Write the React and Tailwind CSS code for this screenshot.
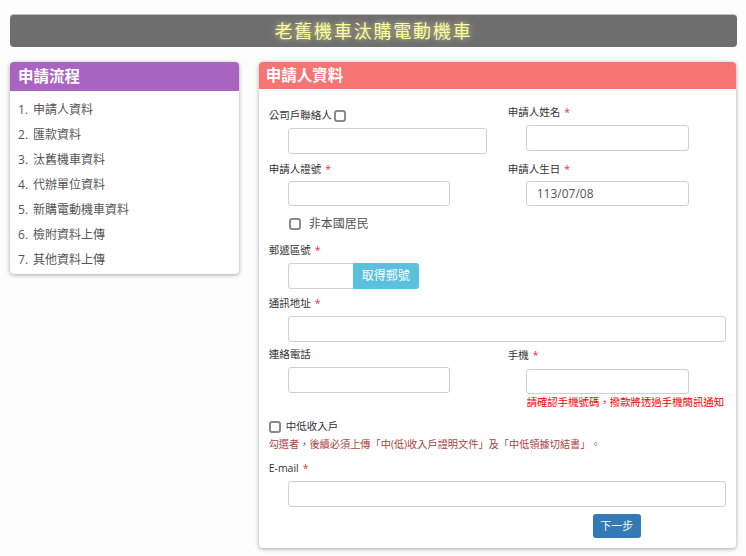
import React from 'react';

const steps = ['申請人資料', '匯款資料', '汰舊機車資料', '代辦單位資料', '新購電動機車資料', '檢附資料上傳', '其他資料上傳'];

const Box = () => (
  <span className="inline-block w-[12px] h-[12px] border-2 border-[#8a8a8a] rounded-[3px] bg-white shrink-0" />
);

const Star = () => <span className="text-[#ee3333] ml-[4px]">*</span>;

const Label = ({ children, star, className = '' }) => (
  <div className={'h-[16px] flex items-center text-[10.5px] text-[#333] ' + className}>
    {children}
    {star && <Star />}
  </div>
);

const Input = ({ w, h = 26, mt = 4, value, ml = 19 }) => (
  <div
    className="border border-[#d0d0d0] rounded-[3px] bg-white flex items-center px-[10px] text-[12px] text-[#555]"
    style={{ width: w, height: h, marginTop: mt, marginLeft: ml }}
  >
    {value}
  </div>
);

const App = () => {
  return (
    <div className="w-[746px] h-[556px] bg-[#fdfdfd] px-[10px] pt-[14px] [text-spacing-trim:space-all]" style={{ fontFamily: '"Open Sans", "Noto Sans CJK TC", sans-serif' }}>
      <div className="w-[727px] h-[33px] bg-[#6e6e6e] rounded-[4px] border-t border-[#bdbdbd] flex items-center justify-center">
        <span className="text-[18px] tracking-[1.8px] text-[#fdfd9c]" style={{ textShadow: '0 0 6px rgba(255,255,180,0.7)' }}>
          老舊機車汰購電動機車
        </span>
      </div>

      <div className="flex gap-[20px] mt-[15px] items-start">
        <div className="w-[229px] bg-white rounded-[4px] shadow-[0_1px_4px_rgba(0,0,0,0.35)] overflow-hidden">
          <div className="h-[29px] bg-[#aa65c3] px-[8px] flex items-center text-white text-[15.5px] font-bold">申請流程</div>
          <ol className="pt-[6px] pb-[2px] pl-[8px]">
            {steps.map((s, i) => (
              <li key={i} className="h-[25px] flex items-center text-[12px] text-[#555]">
                <span className="w-[15px]">{i + 1}.</span>
                <span>{s}</span>
              </li>
            ))}
          </ol>
        </div>

        <div className="w-[478px] bg-white rounded-[4px] shadow-[0_1px_4px_rgba(0,0,0,0.35)] overflow-hidden">
          <div className="h-[27px] bg-[#f77474] px-[7px] flex items-center text-white text-[15.5px] font-bold">申請人資料</div>
          <div className="px-[10px] pt-[16px] pb-[10px]">
            <div className="grid grid-cols-[239px_1fr]">
              <div className="pt-[3px]">
                <Label>公司戶聯絡人<span className="ml-[2px] flex"><Box /></span></Label>
                <Input w={199} />
              </div>
              <div>
                <Label star>申請人姓名</Label>
                <Input w={163} ml={18} />
              </div>
            </div>

            <div className="grid grid-cols-[239px_1fr] mt-[8px]">
              <div>
                <Label star>申請人證號</Label>
                <Input w={162} h={25} mt={3} />
              </div>
              <div>
                <Label star>申請人生日</Label>
                <Input w={163} h={25} mt={3} ml={18} value="113/07/08" />
              </div>
            </div>

            <div className="mt-[10px] ml-[20px] h-[16px] flex items-center gap-[8px] text-[12px] text-[#555]">
              <Box />
              <span>非本國居民</span>
            </div>

            <Label star className="mt-[11px]">郵遞區號</Label>
            <div className="flex mt-[4px] ml-[19px]">
              <div className="w-[65px] h-[26px] border border-[#d0d0d0] border-r-0 rounded-l-[3px] bg-white" />
              <div className="w-[66px] h-[26px] bg-[#5bc0de] rounded-r-[3px] text-white text-[12px] flex items-center justify-center">取得郵號</div>
            </div>

            <Label star className="mt-[7px]">通訊地址</Label>
            <Input w={438} />

            <div className="grid grid-cols-[239px_1fr] mt-[5px]">
              <div>
                <Label>連絡電話</Label>
                <Input w={162} />
              </div>
              <div className="pt-[1px]">
                <Label star>手機</Label>
                <Input w={163} h={25} mt={5} ml={18} />
                <div className="mt-[1px] ml-[19px] h-[16px] flex items-center text-[10.4px] text-[#ff0000] whitespace-nowrap">
                  請確認手機號碼，撥款將透過手機簡訊通知
                </div>
              </div>
            </div>

            <div className="mt-[8px] h-[16px] flex items-center gap-[5px] text-[10.5px] text-[#333]">
              <Box />
              <span>中低收入戶</span>
            </div>
            <div className="mt-[2px] h-[16px] flex items-center text-[10.2px] text-[#a94442] whitespace-nowrap">
              勾選者，後續必須上傳「中(低)收入戶證明文件」及「中低領據切結書」。
            </div>

            <Label star className="mt-[8px]">E-mail</Label>
            <Input w={438} />

            <div className="mt-[7px] ml-[324px] w-[48px] h-[24px] bg-[#337ab7] rounded-[3px] text-white text-[11px] flex items-center justify-center">
              下一步
            </div>
          </div>
        </div>
      </div>
    </div>
  );
};

export default App;
